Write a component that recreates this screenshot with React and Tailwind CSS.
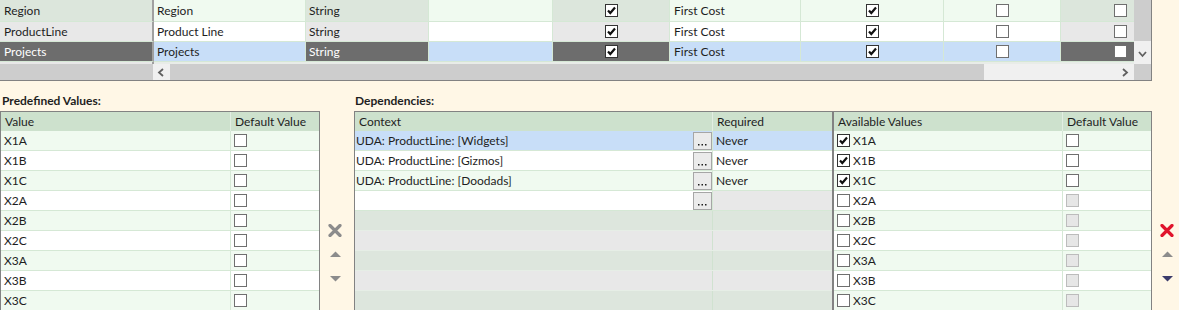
import React from 'react';

const FONT = { fontFamily: 'Lato, "Noto Sans", sans-serif' };

// small check box as drawn by the WinForms grid
const Check = ({ checked = false, disabled = false, onDark = false }) => {
    let cls = 'border-[#6f6f6f] bg-white';
    if (checked) cls = 'border-[#333333] bg-white';
    if (disabled) cls = 'border-[#bcbcbc] bg-[#e6e6e6]';
    if (onDark) cls = 'border-[#6f6f6f] bg-white';
    return (
        <div className={`w-[13px] h-[13px] border shrink-0 flex items-center justify-center ${cls}`}>
            {checked && (
                <svg width="11" height="11" viewBox="0 0 11 11">
                    <path d="M2 5.5 L4.3 8 L9 2.5" fill="none" stroke="#111" strokeWidth="2.2" />
                </svg>
            )}
        </div>
    );
};

const Chevron = ({ dir }) => {
    const d = {
        left: 'M6 1 L2 4.5 L6 8',
        right: 'M2 1 L6 4.5 L2 8',
        down: 'M1 2 L4.5 6 L8 2',
    }[dir];
    return (
        <svg width="9" height="9" viewBox="0 0 9 9">
            <path d={d} fill="none" stroke="#606060" strokeWidth="1.8" />
        </svg>
    );
};

const XIcon = ({ color }) => (
    <svg width="14" height="13" viewBox="0 0 14 13">
        <path d="M2 1.5 L12 11.5 M12 1.5 L2 11.5" stroke={color} strokeWidth="3.2" strokeLinecap="round" />
    </svg>
);

const Tri = ({ up, color }) => (
    <svg width="11" height="6" viewBox="0 0 11 6">
        <path d={up ? 'M0 6 L5.5 0.5 L11 6 Z' : 'M0 0 L11 0 L5.5 5.5 Z'} fill={color} />
    </svg>
);

const topRows = [
    { head: 'Region', name: 'Region', v: 'green', h: 'h-[22px]' },
    { head: 'ProductLine', name: 'Product Line', v: 'white', h: 'h-[20px]' },
    { head: 'Projects', name: 'Projects', v: 'sel', h: 'h-[20px]' },
];

const headBg = { green: 'bg-[#dce6dc] text-[#1e1e1e]', white: 'bg-[#e8e8e8] text-[#1e1e1e]', sel: 'bg-[#6d6d6d] text-white' };
const cellBg = { green: 'bg-[#f0faf0]', white: 'bg-white', sel: 'bg-[#c8def8]' };

const TopGrid = () => (
    <div className="w-[1152px] h-[81px] border-r border-b border-[#828282] flex flex-col">
        <div className="flex h-[64px]">
            <div className="w-[1134px] flex flex-col">
                {topRows.map((r) => (
                    <div key={r.head} className={`flex ${r.h}`}>
                        <div className={`w-[154px] border-r-2 border-r-[#a0a0a0] border-b border-b-[#d5e8d5] pl-[4px] flex items-center ${headBg[r.v]}`}>{r.head}</div>
                        <div className={`w-[152px] border-r border-b border-[#d5e8d5] pl-[3px] flex items-center ${cellBg[r.v]}`}>{r.name}</div>
                        <div className={`w-[123px] border-r border-b border-[#d5e8d5] pl-[3px] flex items-center ${headBg[r.v]}`}>String</div>
                        <div className={`w-[124px] border-r border-b border-[#d5e8d5] ${cellBg[r.v]}`}></div>
                        <div className={`w-[117px] border-r border-b border-[#d5e8d5] flex items-center justify-center ${headBg[r.v]}`}><Check checked /></div>
                        <div className={`w-[131px] border-r border-b border-[#d5e8d5] pl-[4px] flex items-center text-[#1e1e1e] ${cellBg[r.v]}`}>First Cost</div>
                        <div className={`w-[143px] border-r border-b border-[#d5e8d5] flex items-center justify-center ${cellBg[r.v]}`}><Check checked /></div>
                        <div className={`w-[117px] border-r border-b border-[#d5e8d5] flex items-center justify-center ${cellBg[r.v]}`}><Check /></div>
                        <div className={`w-[73px] border-b border-[#d5e8d5] flex items-center justify-end pr-[7px] ${headBg[r.v]}`}><Check onDark={r.v === 'sel'} /></div>
                    </div>
                ))}
                <div className="flex h-[2px]">
                    <div className="w-[154px] bg-[#e8e8e8] border-r-2 border-[#a0a0a0]"></div>
                    <div className="flex-1 bg-[#e8ece8]"></div>
                </div>
            </div>
            <div className="w-[17px] flex flex-col">
                <div className="h-[41px] bg-[#cdcdcd]"></div>
                <div className="flex-1 bg-[#f0f0f0] flex items-end justify-center pb-[5px]"><Chevron dir="down" /></div>
            </div>
        </div>
        <div className="flex h-[16px]">
            <div className="w-[153px] bg-[#cdcdcd]"></div>
            <div className="w-[17px] bg-[#f0f0f0] flex items-center justify-center"><Chevron dir="left" /></div>
            <div className="w-[814px] bg-[#cdcdcd]"></div>
            <div className="flex-1 bg-[#f0f0f0] flex items-center justify-end pr-[4px]"><Chevron dir="right" /></div>
            <div className="w-[17px] bg-[#cdcdcd]"></div>
        </div>
    </div>
);

const values = ['X1A', 'X1B', 'X1C', 'X2A', 'X2B', 'X2C', 'X3A', 'X3B', 'X3C'];
const rowBg = (i) => (i % 2 === 0 ? 'bg-[#f0faf0]' : 'bg-white');

const Label = ({ children, className = '' }) => (
    <div className={`h-[30px] flex items-end pb-[2px] leading-[16px] font-bold text-[12px] text-[#1e1e1e] ${className}`}>{children}</div>
);

const HeadCell = ({ w, children, last }) => (
    <div className={`${w} h-[19px] bg-[#cde1cd] pl-[4px] flex items-center ${last ? '' : 'border-r border-[#e2eee2]'}`}>{children}</div>
);

const Predefined = () => (
    <div className="w-[320px] shrink-0">
        <Label className="pl-[2px]">Predefined Values:</Label>
        <div className="border border-[#828282] border-b-0">
            <div className="flex">
                <HeadCell w="w-[230px]">Value</HeadCell>
                <HeadCell w="w-[88px]" last>Default Value</HeadCell>
            </div>
            {values.map((v, i) => (
                <div key={v} className={`flex h-[20px] border-b border-[#d5e8d5] ${rowBg(i)}`}>
                    <div className="w-[230px] border-r border-[#d5e8d5] pl-[3px] flex items-center">{v}</div>
                    <div className="w-[88px] pl-[3px] flex items-center"><Check /></div>
                </div>
            ))}
        </div>
    </div>
);

const deps = [
    { ctx: 'UDA: ProductLine: [Widgets]', req: 'Never', bg: 'bg-[#c8def8]', reqBg: 'bg-[#c8def8]' },
    { ctx: 'UDA: ProductLine: [Gizmos]', req: 'Never', bg: 'bg-white', reqBg: 'bg-white' },
    { ctx: 'UDA: ProductLine: [Doodads]', req: 'Never', bg: 'bg-[#f0faf0]', reqBg: 'bg-[#f0faf0]' },
    { ctx: '', req: '', bg: 'bg-white', reqBg: 'bg-[#e8e8e8]' },
];

const DotsButton = () => (
    <div className="w-[19px] h-[18px] border border-[#a6a6a6] bg-[#ebebeb] flex items-end justify-center pb-[3px]">
        <svg width="9" height="2" viewBox="0 0 9 2">
            <rect x="0" y="0" width="1.5" height="1.5" fill="#1e1e1e" />
            <rect x="3.5" y="0" width="1.5" height="1.5" fill="#1e1e1e" />
            <rect x="7" y="0" width="1.5" height="1.5" fill="#1e1e1e" />
        </svg>
    </div>
);

const Dependencies = () => (
    <div className="w-[480px] shrink-0">
        <Label className="pl-[1px]">Dependencies:</Label>
        <div className="border-t border-l border-r-2 border-[#828282]">
            <div className="flex">
                <HeadCell w="w-[358px]">Context</HeadCell>
                <HeadCell w="w-[119px]" last>Required</HeadCell>
            </div>
            {deps.map((d, i) => (
                <div key={i} className="flex h-[20px] border-b border-[#d5e8d5]">
                    <div className={`w-[358px] border-r border-[#d5e8d5] flex items-center justify-between ${d.bg}`}>
                        <span className="pl-[1px]">{d.ctx}</span>
                        <DotsButton />
                    </div>
                    <div className={`w-[119px] pl-[3px] flex items-center ${d.reqBg}`}>{d.req}</div>
                </div>
            ))}
            {[0, 1, 2, 3, 4].map((i) => (
                <div key={`e${i}`} className={`flex h-[20px] border-b border-[#e6eee6] ${i % 2 === 0 ? 'bg-[#dde6dd]' : 'bg-[#e8e8e8]'}`}>
                    <div className="w-[358px] border-r border-[#d0e2d0]"></div>
                    <div className="w-[119px]"></div>
                </div>
            ))}
        </div>
    </div>
);

const Available = () => (
    <div className="w-[318px] shrink-0">
        <div className="h-[30px]"></div>
        <div className="border-t border-r border-[#828282]">
            <div className="flex">
                <HeadCell w="w-[229px]">Available Values</HeadCell>
                <HeadCell w="w-[88px]" last>Default Value</HeadCell>
            </div>
            {values.map((v, i) => (
                <div key={v} className={`flex h-[20px] border-b border-[#d5e8d5] ${rowBg(i)}`}>
                    <div className="w-[229px] border-r border-[#d5e8d5] pl-[3px] flex items-center gap-[3px]">
                        <Check checked={i < 3} />
                        <span>{v}</span>
                    </div>
                    <div className="w-[88px] pl-[3px] flex items-center"><Check disabled={i >= 3} /></div>
                </div>
            ))}
        </div>
    </div>
);

const SideButtons = ({ w, pl, xColor, downColor }) => (
    <div className={`${w} ${pl} shrink-0 flex flex-col items-start`}>
        <div className="mt-[143px] w-[14px] flex justify-center"><XIcon color={xColor} /></div>
        <div className="mt-[14px] w-[14px] flex justify-center"><Tri up color="#8c8c8c" /></div>
        <div className="mt-[19px] w-[14px] flex justify-center"><Tri color={downColor} /></div>
    </div>
);

export default function App() {
    return (
        <div className="w-[1179px] h-[310px] overflow-hidden bg-[#fff7e6] text-[12px] text-[#1e1e1e]" style={FONT}>
            <TopGrid />
            <div className="flex">
                <Predefined />
                <SideButtons w="w-[34px]" pl="pl-[8px]" xColor="#8c8c8c" downColor="#8c8c8c" />
                <Dependencies />
                <Available />
                <SideButtons w="w-[27px]" pl="pl-[8px]" xColor="#e0142c" downColor="#3b3b6b" />
            </div>
        </div>
    );
}
